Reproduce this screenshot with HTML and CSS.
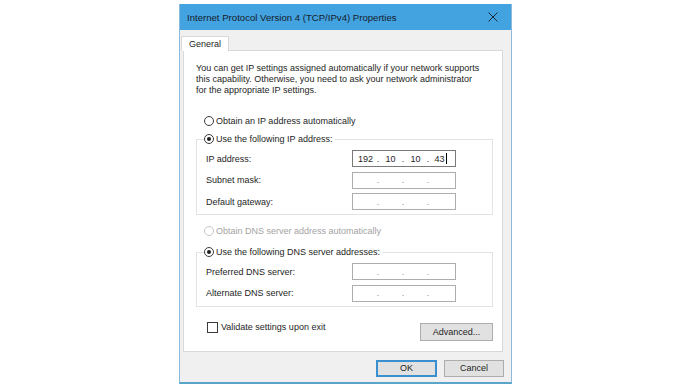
FILE: index.html
```html
<!DOCTYPE html>
<html lang="en">

<head>
    <meta charset="UTF-8">
    <meta name="viewport" content="width=device-width, initial-scale=1.0">
    <title>Internet Protocol Version 4 (TCP/IPv4) Properties</title>
    <link rel="stylesheet" href="styles.css">
</head>

<body>
    <div class="dialog">
        <div class="titlebar">
            <span class="title">Internet Protocol Version 4 (TCP/IPv4) Properties</span>
            <svg class="close" width="10" height="10" viewBox="0 0 10 10">
                <path d="M0.5 0.5 L9.5 9.5 M9.5 0.5 L0.5 9.5" stroke="#1b2a36" stroke-width="1" fill="none" />
            </svg>
        </div>

        <div class="tabs">
            <div class="tab">General</div>
        </div>

        <div class="panel">
            <p class="intro">You can get IP settings assigned automatically if your network supports<br>
                this capability. Otherwise, you need to ask your network administrator<br>
                for the appropriate IP settings.</p>

            <div class="option first"><span class="radio"></span>Obtain an IP address automatically</div>

            <fieldset class="group">
                <legend class="option"><span class="radio checked"></span>Use the following IP address:</legend>
                <div class="row">
                    <span class="label">IP address:</span>
                    <div class="ipbox">
                        <span class="oct">192</span><span class="dot">.</span><span class="oct">10</span><span class="dot">.</span><span class="oct">10</span><span class="dot">.</span><span class="oct">43<span class="caret"></span></span>
                    </div>
                </div>
                <div class="row">
                    <span class="label">Subnet mask:</span>
                    <div class="ipbox empty">
                        <span class="oct"></span><span class="dot">.</span><span class="oct"></span><span class="dot">.</span><span class="oct"></span><span class="dot">.</span><span class="oct"></span>
                    </div>
                </div>
                <div class="row">
                    <span class="label">Default gateway:</span>
                    <div class="ipbox empty">
                        <span class="oct"></span><span class="dot">.</span><span class="oct"></span><span class="dot">.</span><span class="oct"></span><span class="dot">.</span><span class="oct"></span>
                    </div>
                </div>
            </fieldset>

            <div class="option disabled second"><span class="radio"></span>Obtain DNS server address automatically</div>

            <fieldset class="group dns">
                <legend class="option"><span class="radio checked"></span>Use the following DNS server addresses:</legend>
                <div class="row">
                    <span class="label">Preferred DNS server:</span>
                    <div class="ipbox empty">
                        <span class="oct"></span><span class="dot">.</span><span class="oct"></span><span class="dot">.</span><span class="oct"></span><span class="dot">.</span><span class="oct"></span>
                    </div>
                </div>
                <div class="row">
                    <span class="label">Alternate DNS server:</span>
                    <div class="ipbox empty">
                        <span class="oct"></span><span class="dot">.</span><span class="oct"></span><span class="dot">.</span><span class="oct"></span><span class="dot">.</span><span class="oct"></span>
                    </div>
                </div>
            </fieldset>

            <div class="bottom-row">
                <div class="check"><span class="box"></span>Validate settings upon exit</div>
                <button class="btn advanced">Advanced...</button>
            </div>
        </div>

        <div class="footer">
            <button class="btn default">OK</button>
            <button class="btn">Cancel</button>
        </div>
    </div>
</body>

</html>
```

FILE: styles.css
```css
body {
    margin: 0;
    background-color: #ffffff;
    font-family: "Liberation Sans", Arial, sans-serif;
    font-size: 9px;
    color: #1e1e1e;
}

.dialog {
    width: 331px;
    margin: 4px 0 0 179px;
    background-color: #f0f0f0;
    border: 1px solid #8dbad8;
    border-top: none;
    border-bottom: 2px solid #5aa6c8;
}

.titlebar {
    height: 26px;
    background-color: #43a2e0;
    display: flex;
    align-items: center;
    justify-content: space-between;
    padding: 0 13px 0 7px;
}

.title {
    font-size: 9.6px;
    color: #15212b;
}

.close {
    display: block;
}

/* tab strip */
.tabs {
    display: flex;
    padding: 6px 0 0 1px;
}

.tab {
    height: 14px;
    line-height: 14px;
    padding: 0 7px;
    background-color: #ffffff;
    border: 1px solid #d9d9d9;
    border-bottom: none;
    margin-bottom: -1px;
    position: relative;
    z-index: 1;
}

.panel {
    margin: 0 8px 0 3px;
    background-color: #ffffff;
    border: 1px solid #d9d9d9;
    padding: 12px 9px 10px 12px;
}

.intro {
    margin: 0;
    line-height: 11px;
}

.option {
    display: flex;
    align-items: center;
    height: 14px;
    white-space: nowrap;
}

.option.first {
    margin: 18px 0 4px 8px;
}

.option.second {
    margin: 9px 0 7px 8px;
}

.option.disabled {
    color: #a3a3a3;
}

.radio {
    width: 8px;
    height: 8px;
    border: 1px solid #3a3a3a;
    border-radius: 50%;
    background-color: #ffffff;
    margin-right: 2px;
    display: flex;
    align-items: center;
    justify-content: center;
}

.disabled .radio {
    border-color: #c6c6c6;
}

.radio.checked::after {
    content: "";
    width: 4px;
    height: 4px;
    border-radius: 50%;
    background-color: #1e1e1e;
}

/* group boxes */
.group {
    margin: 0;
    padding: 4px 36px 4px 9px;
    border: 1px solid #e3e3e3;
    display: flex;
    flex-direction: column;
    gap: 4.5px;
}

.group legend {
    padding: 0 3px 0 0;
    margin-left: -2px;
}

.row {
    display: flex;
    justify-content: space-between;
    align-items: center;
    height: 17px;
}

.ipbox {
    height: 15px;
    border: 1px solid #7a7a7a;
    display: flex;
    align-items: center;
    padding-left: 3px;
    box-sizing: content-box;
    width: 99px;
}

.ipbox.empty {
    border-color: #adadad;
    color: #8a8a8a;
}

.oct {
    width: 19px;
    text-align: center;
}

.dot {
    width: 6px;
    text-align: center;
}

.caret {
    display: inline-block;
    width: 1px;
    height: 11px;
    background-color: #000000;
    vertical-align: -2px;
    margin-left: 1px;
}

.bottom-row {
    display: flex;
    justify-content: space-between;
    align-items: flex-start;
    margin-top: 15px;
}

.check {
    display: flex;
    align-items: center;
    margin: 0 0 0 11px;
    height: 11px;
}

.box {
    width: 9px;
    height: 9px;
    border: 1px solid #3a3a3a;
    margin-right: 3px;
}

.btn {
    font-family: inherit;
    font-size: 9px;
    color: #1e1e1e;
    background-color: #e1e1e1;
    border: 1px solid #adadad;
    height: 17px;
    padding: 0;
    margin: 0;
}

.advanced {
    width: 73px;
    height: 18px;
    margin-top: 1px;
}

.footer {
    display: flex;
    justify-content: flex-end;
    gap: 7px;
    padding: 8px 7px 5px 0;
}

.footer .btn {
    width: 60px;
}

.btn.default {
    width: 61px;
    border: 2px solid #3a8fcf;
}
```
